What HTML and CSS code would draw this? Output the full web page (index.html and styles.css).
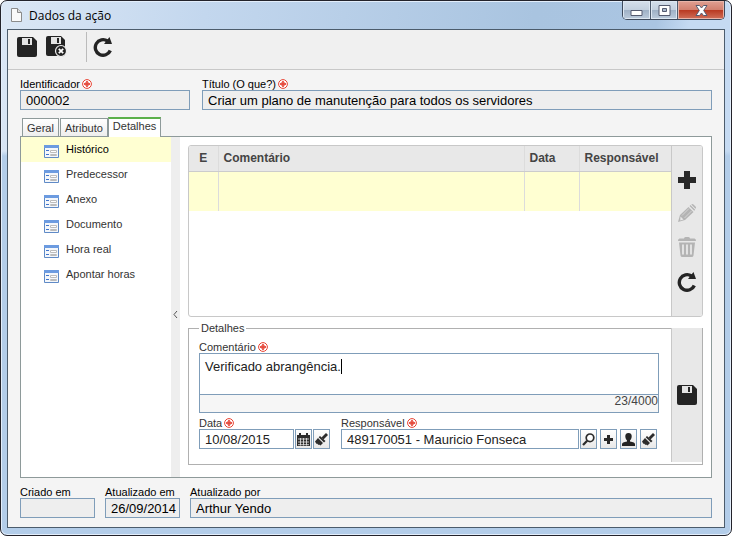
FILE: index.html
```html
<!DOCTYPE html>
<html lang="pt-BR">

<head>
    <meta charset="UTF-8">
    <meta name="viewport" content="width=device-width, initial-scale=1.0">
    <title>Dados da ação</title>
    <link rel="stylesheet" href="styles.css">
</head>

<body>
    <!-- Shared icons -->
    <svg class="sprite" aria-hidden="true">
        <symbol id="i-save" viewBox="0 0 20 20">
            <path fill="#242424" d="M2 0h14l4 4v14q0 2-2 2H2q-2 0-2-2V2q0-2 2-2z" />
            <path fill="#e4e4e4" d="M5 1h10v7H5z" />
            <path fill="#242424" d="M11 2h2v5h-2z" />
        </symbol>
        <symbol id="i-save-close" viewBox="0 0 21 21">
            <path fill="#242424" d="M2 0h13l4 4v14q0 2-2 2H2q-2 0-2-2V2q0-2 2-2z" />
            <path fill="#e4e4e4" d="M5 1h10v7H5z" />
            <path fill="#242424" d="M11 2h2v5h-2z" />
            <circle cx="15" cy="15" r="5.5" fill="#242424" stroke="#eee" stroke-width="1.2" />
            <path d="M12.800 12.800l4.400 4.400M17.200 12.800l-4.400 4.400" stroke="#fff" stroke-width="1.8" />
        </symbol>
        <symbol id="i-refresh" viewBox="0 0 20 20">
            <path d="M14.500 4A7.800 7.800 0 1 0 17.300 13.500" fill="none" stroke="#242424" stroke-width="3.400" />
            <path d="M16.500 0l2.500 7h-8z" fill="#242424" />
        </symbol>
        <symbol id="i-plus" viewBox="0 0 18 18">
            <path fill="#282828" d="M6 0h6v6h6v6h-6v6H6v-6H0V6h6z" />
        </symbol>
        <symbol id="i-pencil" viewBox="0 0 18 18">
            <path fill="#b4b4b4" d="M0 18l2-7L10.500 3l5 5L7 16z" />
            <path fill="#b4b4b4" d="M11.500 2l1-1 4.700 4.700-1 1zM13.300 0.600q1-1 2.200 0l2 2q1 1 0 2.200z" />
            <path d="M4 11.500l7-7M6.500 14l7-7" stroke="#ddd" stroke-width="0.800" />
            <path fill="#e8e8e8" d="M2.500 12.500l3 3-3.300 1z" />
        </symbol>
        <symbol id="i-trash" viewBox="0 0 18 20">
            <path fill="#b4b4b4" d="M6 1.500Q6 0 7.500 0h3Q12 0 12 1.500h4.500q1.500 0 1.500 2.500H0q0-2.500 1.500-2.500zM1 5.500h16l-1.500 13q-.2 1.500-2 1.500h-9q-1.800 0-2-1.500z" />
            <path d="M5 7.500v10M9 7.500v10M13 7.500v10" stroke="#e8e8e8" stroke-width="1.800" />
        </symbol>
        <symbol id="i-form" viewBox="0 0 15 13">
            <path fill="#f4f7fb" stroke="#5f8ac6" d="M.5.500h14v12H.5z" />
            <path fill="#6c9be0" d="M0 0h15v3H0z" />
            <path d="M2 5.500h3M2 9.500h3" stroke="#3f74cc" />
            <path fill="#fff" stroke="#bcbcbc" d="M6.500 5.500h6v2h-6zM6.500 9.500h6v1h-6z" />
        </symbol>
        <symbol id="i-required" viewBox="0 0 10 10">
            <circle cx="5" cy="5" r="4.400" fill="#fff" stroke="#e84030" stroke-width="1" />
            <path d="M5 2v6M2 5h6" stroke="#e02010" stroke-width="1.400" />
            <path d="M3 3l4 4M7 3L3 7" stroke="#e86050" stroke-width=".6" />
        </symbol>
        <symbol id="i-calendar" viewBox="0 0 13 13">
            <path fill="#2c2c2c" d="M0 2h2V0h2v2h5V0h2v2h2v11H0z" />
            <path d="M1 6h11M1 9h11M1 11.700h11M3.500 5v7.500M6.500 5v7.500M9.500 5v7.500" stroke="#e8e8e8" stroke-width=".8" />
        </symbol>
        <symbol id="i-brush" viewBox="0 0 13 13">
            <path d="M7.500 5.500L12 1" stroke="#2c2c2c" stroke-width="2.800" />
            <path fill="#2c2c2c" d="M5 3l5.500 5-1.500 1.500L3.700 4.300z" />
            <path fill="#2c2c2c" d="M3 5l5 5-2.500 2.500L4 11.500l-.5.500L2 10.500l-.5.500L0 8.500z" />
        </symbol>
        <symbol id="i-search" viewBox="0 0 13 13">
            <circle cx="8" cy="4.800" r="3.800" fill="#fff" stroke="#2c2c2c" stroke-width="1.700" />
            <path d="M5.200 7.800L1 12" stroke="#2c2c2c" stroke-width="2.300" />
        </symbol>
        <symbol id="i-user" viewBox="0 0 13 13">
            <path fill="#242424" d="M6.500 0Q10 0 9.700 4 9.300 6.500 8 7.500v1q5 .8 5 2.800V13H0v-1.700q0-2 5-2.800v-1Q3.700 6.500 3.300 4 3 0 6.500 0z" />
        </symbol>
    </svg>

    <div class="window">
        <header class="titlebar">
            <svg class="doc-icon" viewBox="0 0 11 14" aria-hidden="true">
                <path fill="#fafafa" stroke="#8b8b8b" d="M.5.500h6l4 4v9H.5z" />
                <path fill="#ddd" stroke="#8b8b8b" d="M6.500.500v4h4" />
            </svg>
            <h1>Dados da ação</h1>
            <div class="controls">
                <button type="button" class="min" aria-label="Minimizar">
                    <svg width="13" height="6" viewBox="0 0 13 6"><path fill="#fff" stroke="#555b70" d="M1 .5h11v5H1z" /></svg>
                </button>
                <button type="button" class="max" aria-label="Maximizar">
                    <svg width="13" height="11" viewBox="0 0 13 11"><path fill="#fff" stroke="#555b70" d="M1 .5h11v10H1z" /><path fill="#a9b8cc" stroke="#555b70" d="M4.500 3.500h4v3h-4z" /></svg>
                </button>
                <button type="button" class="close" aria-label="Fechar">
                    <svg width="13" height="11" viewBox="0 0 13 11"><path fill="#fff" stroke="#555b70" d="M1 .5h3.500l2 2.500 2-2.500H12L8.700 5.500 12 10.500H8.500l-2-2.500-2 2.500H1L4.300 5.500z" /></svg>
                </button>
            </div>
        </header>

        <main class="content">
            <div class="toolbar">
                <button type="button" aria-label="Salvar"><svg class="i20"><use href="#i-save" /></svg></button>
                <button type="button" aria-label="Salvar e sair"><svg class="i21"><use href="#i-save-close" /></svg></button>
                <span class="separator"></span>
                <button type="button" aria-label="Atualizar"><svg class="i20"><use href="#i-refresh" /></svg></button>
            </div>

            <form class="form">
                <div class="row head">
                    <div class="field ident">
                        <label for="ident">Identificador <svg class="req"><use href="#i-required" /></svg></label>
                        <input type="text" id="ident" value="000002" readonly>
                    </div>
                    <div class="field grow">
                        <label for="titulo">Título (O que?) <svg class="req"><use href="#i-required" /></svg></label>
                        <input type="text" id="titulo" value="Criar um plano de manutenção para todos os servidores" readonly>
                    </div>
                </div>

                <div class="tabs" role="tablist">
                    <button type="button" role="tab">Geral</button>
                    <button type="button" role="tab">Atributo</button>
                    <button type="button" role="tab" class="active" aria-selected="true">Detalhes</button>
                </div>

                <div class="panel">
                    <nav class="menu">
                        <a href="#" class="selected"><svg><use href="#i-form" /></svg>Histórico</a>
                        <a href="#"><svg><use href="#i-form" /></svg>Predecessor</a>
                        <a href="#"><svg><use href="#i-form" /></svg>Anexo</a>
                        <a href="#"><svg><use href="#i-form" /></svg>Documento</a>
                        <a href="#"><svg><use href="#i-form" /></svg>Hora real</a>
                        <a href="#"><svg><use href="#i-form" /></svg>Apontar horas</a>
                    </nav>
                    <button type="button" class="splitter" aria-label="Recolher">
                        <svg width="5" height="9" viewBox="0 0 5 9"><path d="M4 1L1 4.500 4 8" fill="none" stroke="#555" /></svg>
                    </button>

                    <div class="detail">
                        <div class="grid">
                            <div class="grid-body">
                                <table>
                                    <thead>
                                        <tr>
                                            <th class="c-e">E</th>
                                            <th>Comentário</th>
                                            <th class="c-data">Data</th>
                                            <th class="c-resp">Responsável</th>
                                        </tr>
                                    </thead>
                                    <tbody>
                                        <tr>
                                            <td></td>
                                            <td></td>
                                            <td></td>
                                            <td></td>
                                        </tr>
                                    </tbody>
                                </table>
                            </div>
                            <div class="side">
                                <button type="button" aria-label="Incluir"><svg class="i18"><use href="#i-plus" /></svg></button>
                                <button type="button" aria-label="Editar" disabled><svg class="i18"><use href="#i-pencil" /></svg></button>
                                <button type="button" aria-label="Excluir" disabled><svg class="i20"><use href="#i-trash" /></svg></button>
                                <button type="button" aria-label="Atualizar lista"><svg class="i20"><use href="#i-refresh" /></svg></button>
                            </div>
                        </div>

                        <fieldset>
                            <legend>Detalhes</legend>
                            <div class="fields">
                                <div class="field">
                                    <label for="comentario">Comentário <svg class="req"><use href="#i-required" /></svg></label>
                                    <div class="comment">
                                        <textarea id="comentario">Verificado abrangência.</textarea>
                                        <span class="caret"></span>
                                        <div class="counter">23/4000</div>
                                    </div>
                                </div>
                                <div class="row">
                                    <div class="field">
                                        <label for="data">Data <svg class="req"><use href="#i-required" /></svg></label>
                                        <div class="combo tight">
                                            <input type="text" id="data" class="date" value="10/08/2015">
                                            <button type="button" aria-label="Calendário"><svg><use href="#i-calendar" /></svg></button>
                                            <button type="button" aria-label="Limpar data"><svg><use href="#i-brush" /></svg></button>
                                        </div>
                                    </div>
                                    <div class="field grow">
                                        <label for="resp">Responsável <svg class="req"><use href="#i-required" /></svg></label>
                                        <div class="combo">
                                            <input type="text" id="resp" value="489170051 - Mauricio Fonseca">
                                            <button type="button" aria-label="Pesquisar"><svg><use href="#i-search" /></svg></button>
                                            <button type="button" aria-label="Adicionar"><svg class="small"><use href="#i-plus" /></svg></button>
                                            <button type="button" aria-label="Usuário"><svg><use href="#i-user" /></svg></button>
                                            <button type="button" aria-label="Limpar responsável"><svg><use href="#i-brush" /></svg></button>
                                        </div>
                                    </div>
                                </div>
                            </div>
                            <div class="side save">
                                <button type="button" aria-label="Salvar detalhes"><svg class="i20"><use href="#i-save" /></svg></button>
                            </div>
                        </fieldset>
                    </div>
                </div>

                <div class="row foot">
                    <div class="field short">
                        <label for="criado">Criado em</label>
                        <input type="text" id="criado" readonly>
                    </div>
                    <div class="field short">
                        <label for="atualizado">Atualizado em</label>
                        <input type="text" id="atualizado" value="26/09/2014" readonly>
                    </div>
                    <div class="field grow">
                        <label for="por">Atualizado por</label>
                        <input type="text" id="por" value="Arthur Yendo" readonly>
                    </div>
                </div>
            </form>
        </main>
    </div>
</body>

</html>
```
FILE: styles.css
```css
* {
    box-sizing: border-box;
}

body {
    margin: 0;
    background-color: #fff;
    font-family: "Liberation Sans", Arial, sans-serif;
    font-size: 11px;
    color: #222;
}

button {
    margin: 0;
    padding: 0;
    border: none;
    background: none;
    font-family: inherit;
    font-size: inherit;
    color: inherit;
    display: flex;
    align-items: center;
    justify-content: center;
}

svg {
    display: block;
    flex: none;
}

.sprite {
    position: absolute;
    width: 0;
    height: 0;
}

.i18 {
    width: 18px;
    height: 18px;
}

.i20 {
    width: 20px;
    height: 20px;
}

.i21 {
    width: 21px;
    height: 21px;
}

/* Window frame */
.window {
    min-height: 100vh;
    display: flex;
    flex-direction: column;
    padding: 0 6px 7px;
    border: 1px solid #23232b;
    border-radius: 7px;
    background: linear-gradient(to bottom, transparent 150px, #b3cde9 155px),
        linear-gradient(100deg, #dbe7f5 0, #c3d7ee 25%, #a9c4e0 65%, #aac5e2 80%, #c5daf2 84%, #c5daf2 100%);
    box-shadow: inset 0 0 0 1px #e3eefb;
}

.titlebar {
    height: 28px;
    display: flex;
    align-items: center;
    gap: 7px;
    padding-left: 4px;
}

.doc-icon {
    width: 11px;
    height: 14px;
}

.titlebar h1 {
    flex: 1;
    margin: 0;
    font-family: "Open Sans", sans-serif;
    font-size: 12px;
    font-weight: normal;
    color: #000;
}

.controls {
    align-self: flex-start;
    display: flex;
    height: 19px;
    border: 1px solid #3e4a5c;
    border-top: none;
    border-radius: 0 0 5px 5px;
    overflow: hidden;
}

.controls button {
    width: 28px;
    background: linear-gradient(#d5dfeb 0, #c3d0df 48%, #9fb1c6 52%, #bccbdc 100%);
    border-right: 1px solid #4e5b6e;
    box-shadow: inset 0 0 0 1px #dde7f2;
}

.controls .min {
    padding-top: 5px;
}

.controls .max {
    width: 27px;
}

.controls .close {
    width: 46px;
    border-right: none;
    background: linear-gradient(#e0a093 0, #d2806f 48%, #b93a22 52%, #d0705a 100%);
    box-shadow: inset 0 0 0 1px #e8b4a8;
}

.content {
    flex: 1;
    display: flex;
    flex-direction: column;
    background-color: #f4f4f4;
    border: 1px solid #4c5c6c;
}

.toolbar {
    height: 40px;
    display: flex;
    align-items: center;
    gap: 9px;
    padding: 0 9px 6px;
    background-color: #f0f0f0;
    border-bottom: 1px solid #c8c8c8;
}

.separator {
    width: 1px;
    height: 30px;
    margin: 0 -3px 0 10px;
    background-color: #bbb;
}

/* Fields */
.form {
    flex: 1;
    display: flex;
    flex-direction: column;
    padding: 8px 12px 9px;
}

.row {
    display: flex;
    gap: 11px;
}

.head {
    gap: 12px;
}

.foot {
    gap: 10px;
    padding-top: 8px;
}

.field {
    display: flex;
    flex-direction: column;
}

.grow {
    flex: 1;
}

.ident {
    width: 170px;
}

.short {
    width: 75px;
}

.short input {
    padding-right: 0;
}

label {
    display: flex;
    align-items: center;
    gap: 2px;
    height: 12px;
    line-height: 12px;
    color: #000;
}

.req {
    width: 10px;
    height: 10px;
}

input,
textarea {
    width: 100%;
    margin: 0;
    border: 1px solid #7f9db9;
    border-radius: 0;
    background-color: #fff;
    font-family: inherit;
    font-size: 13px;
    color: #222;
    outline: none;
}

input {
    height: 20px;
    padding: 0 5px;
}

input:read-only {
    background-color: #eee;
    color: #000;
}

/* Tabs */
.tabs {
    display: flex;
    align-items: flex-end;
    height: 19px;
    margin-top: 7px;
    padding-left: 2px;
}

.tabs button {
    height: 18px;
    padding: 0 4px;
    margin-right: 1px;
    background: linear-gradient(#fff, #eee);
    border: 1px solid #8e9a9a;
    border-bottom: none;
    font-size: 11px;
    color: #333;
}

.tabs button.active {
    z-index: 1;
    height: 20px;
    margin: 0 0 -1px -1px;
    padding-bottom: 4px;
    background: #fff;
    border-top: 2px solid #5bb04b;
}

.panel {
    flex: 1;
    display: flex;
    background-color: #fff;
    border: 1px solid #8e9a9a;
}

.menu {
    width: 150px;
}

.menu a {
    display: flex;
    gap: 7px;
    height: 25px;
    padding-left: 23px;
    line-height: 24px;
    color: #333;
    text-decoration: none;
}

.menu a.selected {
    background-color: #ffffd2;
    color: #000;
}

.menu svg {
    width: 15px;
    height: 13px;
    margin-top: 8px;
}

.splitter {
    width: 9px;
    padding-top: 14px;
    background-color: #eee;
}

.detail {
    flex: 1;
    display: flex;
    flex-direction: column;
    gap: 4px;
    padding: 8px 8px 12px;
}

/* Grid */
.grid {
    flex: 1;
    display: flex;
    border: 1px solid #c8c8c8;
    border-radius: 3px;
    overflow: hidden;
}

.grid-body {
    flex: 1;
}

table {
    width: 100%;
    table-layout: fixed;
    border-collapse: collapse;
}

th {
    height: 25px;
    padding: 0 5px;
    background-color: #e8e8e8;
    border-bottom: 1px solid #ccc;
    font-size: 12px;
    text-align: left;
    color: #444;
}

td {
    height: 40px;
    background-color: #ffffd2;
}

th + th,
td + td {
    border-left: 1px solid #dcdcdc;
}

.c-e {
    width: 29px;
    text-align: center;
}

.c-data {
    width: 55px;
}

.c-resp {
    width: 92px;
}

.side {
    width: 31px;
    display: flex;
    flex-direction: column;
    align-items: center;
    gap: 15px;
    padding-top: 25px;
    background-color: #e8e8e8;
    border-left: 1px solid #c8c8c8;
}

/* Detail form */
fieldset {
    display: flex;
    min-width: 0;
    margin: 0;
    padding: 0 0 2px;
    border: 1px solid #b0b0b0;
}

legend {
    margin-left: 10px;
    padding: 0 2px;
    line-height: 14px;
    color: #333;
}

fieldset label {
    color: #333;
}

.fields {
    flex: 1;
    display: flex;
    flex-direction: column;
    gap: 4px;
    padding: 6px 12px 13px 10px;
}

.side.save {
    margin-top: -7px;
    padding: 0;
    justify-content: center;
}

.comment {
    position: relative;
    display: flex;
    flex-direction: column;
    border: 1px solid #7f9db9;
}

.comment textarea {
    height: 41px;
    padding: 5px;
    border: none;
    border-bottom: 1px solid #7f9db9;
    line-height: 16px;
    resize: none;
}

.caret {
    position: absolute;
    top: 5px;
    left: 141px;
    width: 1px;
    height: 15px;
    background-color: #000;
}

.counter {
    height: 17px;
    background-color: #f6f6f6;
    font-size: 12px;
    line-height: 13px;
    text-align: right;
    color: #444;
}

.combo {
    display: flex;
    gap: 3px;
    padding-right: 2px;
}

.combo input {
    flex: 1;
    min-width: 0;
    margin-right: -2px;
}

.combo.tight {
    gap: 1px;
    padding-right: 0;
}

.combo input.date {
    flex: none;
    width: 95px;
    margin-right: 0;
}

.combo button {
    width: 17px;
    height: 20px;
    border: 1px solid #7f9db9;
    background: linear-gradient(#fff, #e8e8e8);
}

.combo svg {
    width: 13px;
    height: 13px;
}

.combo svg.small {
    width: 9px;
    height: 9px;
}
```
